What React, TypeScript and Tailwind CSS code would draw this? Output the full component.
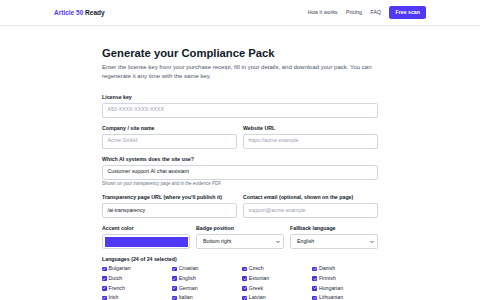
import React from "react";

const languages = [
  "Bulgarian", "Croatian", "Czech", "Danish",
  "Dutch", "English", "Estonian", "Finnish",
  "French", "German", "Greek", "Hungarian",
  "Irish", "Italian", "Latvian", "Lithuanian",
  "Maltese", "Polish", "Portuguese", "Romanian",
  "Slovak", "Slovenian", "Spanish", "Swedish",
];

const Label = ({ children }: { children: React.ReactNode }) => (
  <div className="text-[5.25px] leading-[7.5px] font-bold text-gray-900 mb-[1.5px]">{children}</div>
);

const Input = ({ value, placeholder }: { value?: string; placeholder?: string }) => (
  <div className="h-[15px] flex items-center px-[4.5px] border border-gray-300 rounded-[2.25px] bg-white text-[5.25px]">
    {value ? <span className="text-gray-900">{value}</span> : <span className="text-gray-400">{placeholder}</span>}
  </div>
);

const Select = ({ value }: { value: string }) => (
  <div className="h-[15px] flex items-center justify-between pl-[6px] pr-[3px] border border-gray-300 rounded-[2.25px] bg-white text-[5.25px] text-gray-900">
    <span>{value}</span>
    <svg width="4" height="4" viewBox="0 0 10 10" fill="none">
      <path d="M2 3.5 5 6.5 8 3.5" stroke="#111827" strokeWidth="1.8" strokeLinecap="round" strokeLinejoin="round" />
    </svg>
  </div>
);

const Checkbox = () => (
  <div className="w-[4.5px] h-[4.5px] rounded-[1px] bg-indigo-700 flex items-center justify-center shrink-0">
    <svg width="4" height="4" viewBox="0 0 10 10" fill="none">
      <path d="M2 5.2 4.2 7.3 8 2.8" stroke="white" strokeWidth="1.8" strokeLinecap="round" strokeLinejoin="round" />
    </svg>
  </div>
);

export default function App() {
  return (
    <div className="min-h-screen bg-white" style={{ fontFamily: '"Liberation Sans", Arial, sans-serif' }}>
      <header className="border-b border-gray-200">
        <div className="w-[372px] mx-auto h-[25px] flex items-center justify-between">
          <div className="text-[6.5px] font-bold">
            <span className="text-indigo-600">Article 50</span> <span className="text-gray-900">Ready</span>
          </div>
          <nav className="flex items-center gap-[8.5px] text-[5.25px] text-gray-700">
            <span>How it works</span>
            <span>Pricing</span>
            <span>FAQ</span>
            <span className="bg-indigo-600 text-white font-bold rounded-[2.25px] px-[6px] py-[3px] leading-[7.5px]">Free scan</span>
          </nav>
        </div>
      </header>

      <main className="w-[276px] mx-auto pt-[20.5px] pb-6">
        <h1 className="text-[11.25px] leading-[13.5px] font-bold text-gray-900">Generate your Compliance Pack</h1>
        <p className="mt-[3px] text-[6px] leading-[9px] text-gray-600">
          Enter the license key from your purchase receipt, fill in your details, and download your pack. You can regenerate it any time with the same key.
        </p>

        <div className="mt-[12.5px] flex flex-col gap-[7px]">
          <div>
            <Label>License key</Label>
            <Input placeholder="A50-XXXX-XXXX-XXXX" />
          </div>

          <div className="grid grid-cols-2 gap-[6px]">
            <div>
              <Label>Company / site name</Label>
              <Input placeholder="Acme GmbH" />
            </div>
            <div>
              <Label>Website URL</Label>
              <Input placeholder="https://acme.example" />
            </div>
          </div>

          <div>
            <Label>Which AI systems does the site use?</Label>
            <Input value="Customer support AI chat assistant" />
            <div className="mt-[1.5px] text-[4.5px] leading-[6px] text-gray-500">Shown on your transparency page and in the evidence PDF.</div>
          </div>

          <div className="grid grid-cols-2 gap-[6px]">
            <div>
              <Label>Transparency page URL (where you'll publish it)</Label>
              <Input value="/ai-transparency" />
            </div>
            <div>
              <Label>Contact email (optional, shown on the page)</Label>
              <Input placeholder="support@acme.example" />
            </div>
          </div>

          <div className="grid grid-cols-3 gap-[6px]">
            <div>
              <Label>Accent color</Label>
              <div className="h-[15px] border border-gray-300 rounded-[2.25px] bg-white p-[1.5px]">
                <div className="h-full w-full bg-indigo-600" />
              </div>
            </div>
            <div>
              <Label>Badge position</Label>
              <Select value="Bottom right" />
            </div>
            <div>
              <Label>Fallback language</Label>
              <Select value="English" />
            </div>
          </div>

          <div>
            <div className="text-[5.25px] leading-[7.5px] font-bold text-gray-900 mb-[1.5px]">Languages (24 of 24 selected)</div>
            <div className="grid grid-cols-4 gap-x-[4.5px] gap-y-[2.25px]">
              {languages.map((l) => (
                <div key={l} className="flex items-center gap-[2px] text-[5.25px] leading-[7.5px] text-gray-800">
                  <Checkbox />
                  <span>{l}</span>
                </div>
              ))}
            </div>
          </div>
        </div>
      </main>
    </div>
  );
}
